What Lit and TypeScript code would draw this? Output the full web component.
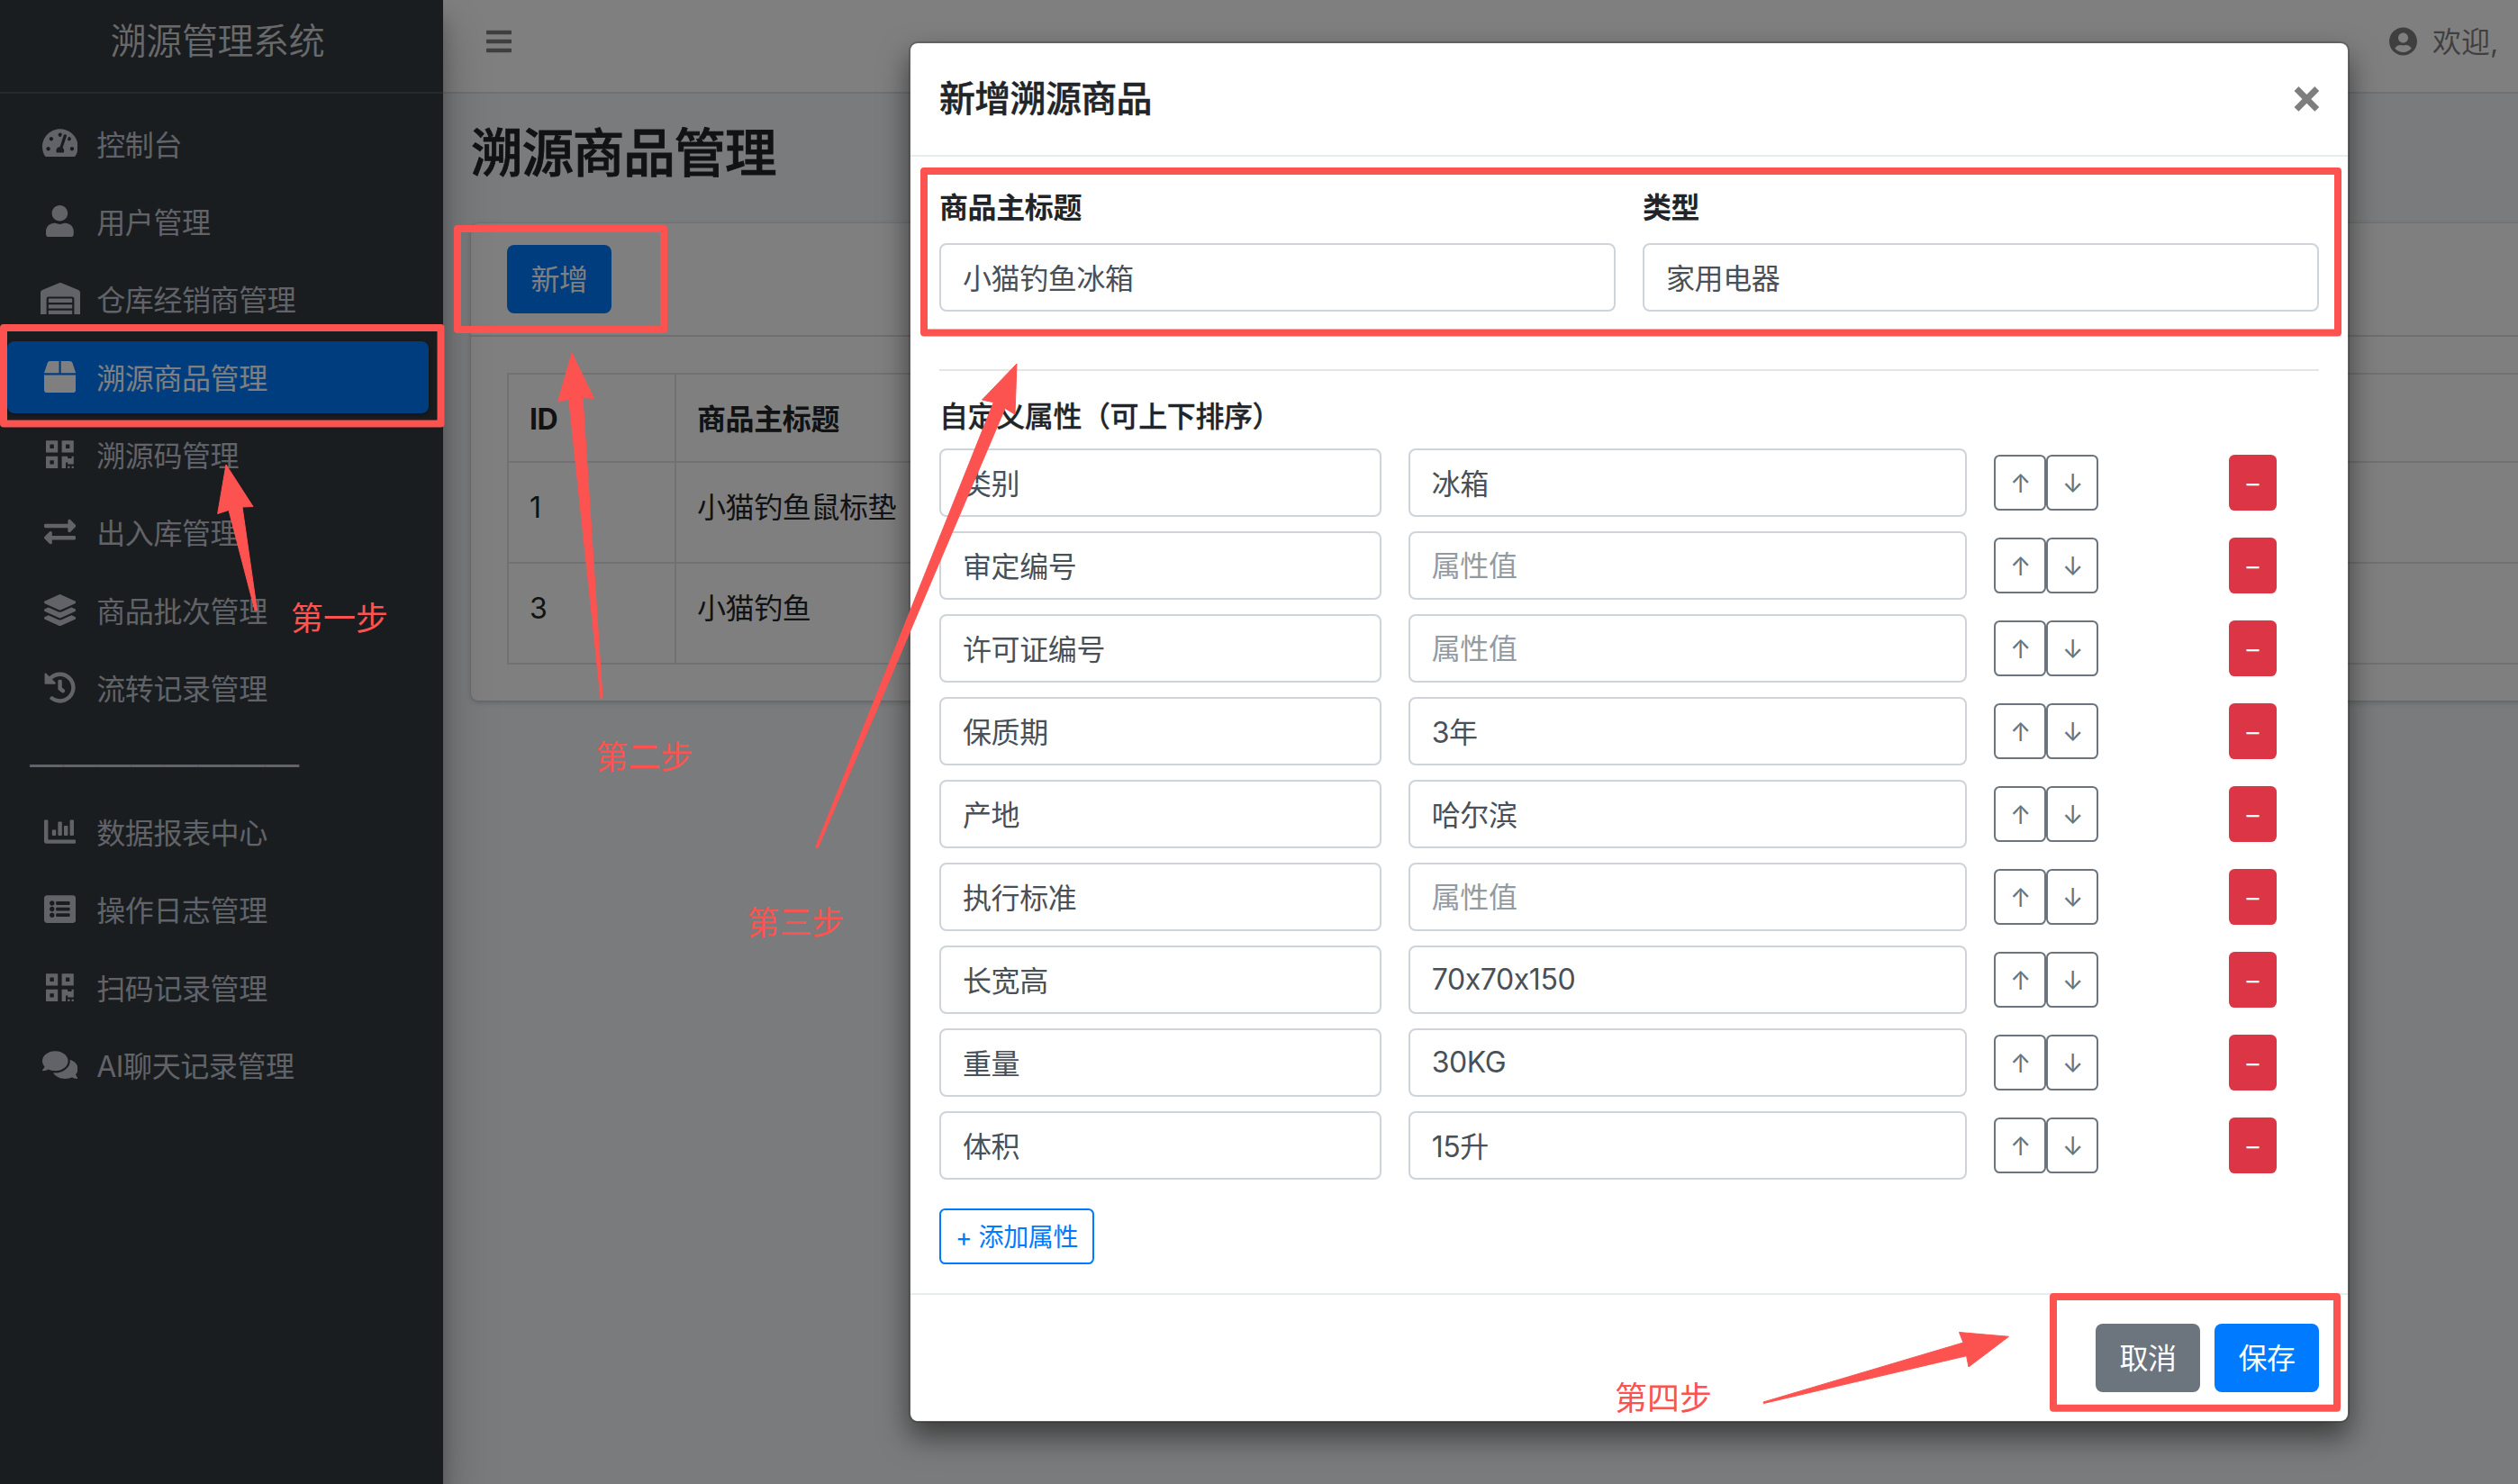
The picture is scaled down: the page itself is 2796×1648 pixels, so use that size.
import { LitElement, html, svg, css } from "lit";
import { customElement, property, state } from "lit/decorators.js";
import { classMap } from "lit/directives/class-map.js";

interface Icon {
  w: number;
  d: string;
}

interface NavItem {
  icon: string;
  label: string;
  active?: boolean;
}

interface Attr {
  name: string;
  value: string;
}

/* =========================
   ICONS
========================= */
const ICONS: Record<string, Icon> = {
  bars: {
    w: 448,
    d: "M16 132h416c8.837 0 16-7.163 16-16V76c0-8.837-7.163-16-16-16H16C7.163 60 0 67.163 0 76v40c0 8.837 7.163 16 16 16zm0 160h416c8.837 0 16-7.163 16-16v-40c0-8.837-7.163-16-16-16H16c-8.837 0-16 7.163-16 16v40c0 8.837 7.163 16 16 16zm0 160h416c8.837 0 16-7.163 16-16v-40c0-8.837-7.163-16-16-16H16c-8.837 0-16 7.163-16 16v40c0 8.837 7.163 16 16 16z",
  },
  userCircle: {
    w: 496,
    d: "M248 8C111 8 0 119 0 256s111 248 248 248 248-111 248-248S385 8 248 8zm0 96c48.6 0 88 39.4 88 88s-39.4 88-88 88-88-39.4-88-88 39.4-88 88-88zm0 344c-58.7 0-111.3-26.6-146.5-68.2 18.8-35.4 55.6-59.8 98.5-59.8 2.4 0 4.8.4 7.1 1.1 13 4.2 26.6 6.9 40.9 6.9 14.3 0 28-2.7 40.9-6.9 2.3-.7 4.7-1.1 7.1-1.1 42.9 0 79.7 24.4 98.5 59.8C359.3 421.4 306.7 448 248 448z",
  },
  dashboard: {
    w: 576,
    d: "M288 32C128.94 32 0 160.94 0 320c0 52.8 14.25 102.26 39.06 144.8 5.61 9.62 16.3 15.2 27.44 15.2h443c11.14 0 21.83-5.58 27.44-15.2C561.75 422.26 576 372.8 576 320c0-159.06-128.94-288-288-288zm0 64c14.71 0 26.58 10.13 30.32 23.65-1.11 2.26-2.64 4.23-3.45 6.67l-9.22 27.67c-5.13 3.49-10.97 6.01-17.64 6.01-17.67 0-32-14.33-32-32S270.33 96 288 96zM96 384c-17.67 0-32-14.33-32-32s14.33-32 32-32 32 14.33 32 32-14.33 32-32 32zm48-160c-17.67 0-32-14.33-32-32s14.33-32 32-32 32 14.33 32 32-14.33 32-32 32zm246.77-72.41l-61.33 184C343.13 347.33 352 364.54 352 384c0 11.72-3.38 22.55-8.88 32H232.88c-5.5-9.45-8.88-20.28-8.88-32 0-33.94 26.5-61.43 59.9-63.59l61.34-184.01c4.17-12.56 17.73-19.45 30.36-15.17 12.57 4.19 19.35 17.79 15.17 30.36zm14.66 57.2l15.52-46.55c3.47-1.29 7.13-2.23 11.05-2.23 17.67 0 32 14.33 32 32s-14.33 32-32 32c-11.38-.01-20.89-6.28-26.57-15.22zM480 384c-17.67 0-32-14.33-32-32s14.33-32 32-32 32 14.33 32 32-14.33 32-32 32z",
  },
  user: {
    w: 448,
    d: "M224 256c70.7 0 128-57.3 128-128S294.7 0 224 0 96 57.3 96 128s57.3 128 128 128zm89.6 32h-16.7c-22.2 10.2-46.9 16-72.9 16s-50.6-5.8-72.9-16h-16.7C60.2 288 0 348.2 0 422.4V464c0 26.5 21.5 48 48 48h352c26.5 0 48-21.5 48-48v-41.6c0-74.2-60.2-134.4-134.4-134.4z",
  },
  warehouse: {
    w: 640,
    d: "M504 352H136.4c-4.4 0-8 3.6-8 8l-.1 48c0 4.4 3.6 8 8 8H504c4.4 0 8-3.6 8-8v-48c0-4.4-3.6-8-8-8zm0 96H136.1c-4.4 0-8 3.6-8 8l-.1 48c0 4.4 3.6 8 8 8h368c4.4 0 8-3.6 8-8v-48c0-4.4-3.6-8-8-8zm0-192H136.6c-4.4 0-8 3.6-8 8l-.1 48c0 4.4 3.6 8 8 8H504c4.4 0 8-3.6 8-8v-48c0-4.4-3.6-8-8-8zm106.5-139L338.4 3.7a48.15 48.15 0 0 0-36.9 0L29.5 117C11.7 124.5 0 141.9 0 161.3V504c0 4.4 3.6 8 8 8h80c4.4 0 8-3.6 8-8V256c0-17.6 14.6-32 32.6-32h382.8c18 0 32.6 14.4 32.6 32v248c0 4.4 3.6 8 8 8h80c4.4 0 8-3.6 8-8V161.3c0-19.4-11.7-36.8-29.5-44.3z",
  },
  box: {
    w: 512,
    d: "M509.5 184.6L458.9 32.8C452.4 13.2 434.1 0 413.4 0H272v192h238.7c-.4-2.5-.4-5-1.2-7.4zM240 0H98.6c-20.7 0-39 13.2-45.5 32.8L2.5 184.6c-.8 2.4-.8 4.9-1.2 7.4H240V0zM0 224v240c0 26.5 21.5 48 48 48h416c26.5 0 48-21.5 48-48V224H0z",
  },
  qrcode: {
    w: 448,
    d: "M0 224h192V32H0v192zM64 96h64v64H64V96zm192-64v192h192V32H256zm128 128h-64V96h64v64zM0 480h192V288H0v192zm64-128h64v64H64v-64zm352-64h32v128h-96v-32h-32v96h-64V288h96v32h64v-32zm0 160h32v32h-32v-32zm-64 0h32v32h-32v-32z",
  },
  exchange: {
    w: 512,
    d: "M0 168v-16c0-13.255 10.745-24 24-24h360V80c0-21.367 25.899-32.042 40.971-16.971l80 80c9.372 9.373 9.372 24.569 0 33.941l-80 80C409.956 271.982 384 261.456 384 240v-48H24c-13.255 0-24-10.745-24-24zm488 152H128v-48c0-21.314-25.862-32.08-40.971-16.971l-80 80c-9.372 9.373-9.372 24.569 0 33.941l80 80C102.057 463.997 128 453.437 128 432v-48h360c13.255 0 24-10.745 24-24v-16c0-13.255-10.745-24-24-24z",
  },
  layers: {
    w: 512,
    d: "M12.41 148.02l232.94 105.67c6.8 3.09 14.49 3.09 21.29 0l232.94-105.67c16.55-7.51 16.55-32.52 0-40.03L266.65 2.31a25.607 25.607 0 0 0-21.29 0L12.41 107.98c-16.55 7.51-16.55 32.53 0 40.04zm487.18 88.28l-58.09-26.33-161.64 73.27c-7.56 3.43-15.59 5.17-23.86 5.17s-16.29-1.74-23.86-5.17L70.51 209.97l-58.1 26.33c-16.55 7.5-16.55 32.5 0 40l232.94 105.59c6.8 3.08 14.49 3.08 21.29 0L499.59 276.3c16.55-7.5 16.55-32.5 0-40zm0 127.8l-57.87-26.23-161.86 73.37c-7.56 3.43-15.59 5.17-23.86 5.17s-16.29-1.74-23.86-5.17L70.29 337.87 12.41 364.1c-16.55 7.5-16.55 32.5 0 40l232.94 105.59c6.8 3.08 14.49 3.08 21.29 0L499.59 404.1c16.55-7.5 16.55-32.5 0-40z",
  },
  history: {
    w: 512,
    d: "M504 255.531c.253 136.64-111.18 248.372-247.82 248.468-59.015.042-113.223-20.53-155.822-54.911-11.077-8.94-11.905-25.541-1.839-35.607l11.267-11.267c8.609-8.609 22.353-9.551 31.891-1.984C173.062 425.135 212.781 440 256 440c101.705 0 184-82.311 184-184 0-101.705-82.311-184-184-184-48.814 0-93.149 18.969-126.068 49.932l50.754 50.754c10.08 10.08 2.941 27.314-11.313 27.314H24c-8.837 0-16-7.163-16-16V38.627c0-14.254 17.234-21.393 27.314-11.314l49.372 49.372C129.209 34.136 189.552 8 256 8c136.81 0 247.747 110.78 248 247.531zm-180.912 78.784l9.823-12.63c8.138-10.463 6.253-25.542-4.21-33.679L288 256.349V152c0-13.255-10.745-24-24-24h-16c-13.255 0-24 10.745-24 24v135.651l65.409 50.874c10.463 8.137 25.541 6.253 33.679-4.21z",
  },
  chart: {
    w: 512,
    d: "M332.8 320h38.4c6.4 0 12.8-6.4 12.8-12.8V172.8c0-6.4-6.4-12.8-12.8-12.8h-38.4c-6.4 0-12.8 6.4-12.8 12.8v134.4c0 6.4 6.4 12.8 12.8 12.8zm96 0h38.4c6.4 0 12.8-6.4 12.8-12.8V76.8c0-6.4-6.4-12.8-12.8-12.8h-38.4c-6.4 0-12.8 6.4-12.8 12.8v230.4c0 6.4 6.4 12.8 12.8 12.8zm-288 0h38.4c6.4 0 12.8-6.4 12.8-12.8v-70.4c0-6.4-6.4-12.8-12.8-12.8h-38.4c-6.4 0-12.8 6.4-12.8 12.8v70.4c0 6.4 6.4 12.8 12.8 12.8zm96 0h38.4c6.4 0 12.8-6.4 12.8-12.8V108.8c0-6.4-6.4-12.8-12.8-12.8h-38.4c-6.4 0-12.8 6.4-12.8 12.8v198.4c0 6.4 6.4 12.8 12.8 12.8zM496 384H64V80c0-8.84-7.16-16-16-16H16C7.16 64 0 71.16 0 80v336c0 17.67 14.33 32 32 32h464c8.84 0 16-7.16 16-16v-32c0-8.84-7.16-16-16-16z",
  },
  list: {
    w: 512,
    d: "M464 480H48c-26.51 0-48-21.49-48-48V80c0-26.51 21.49-48 48-48h416c26.51 0 48 21.49 48 48v352c0 26.51-21.49 48-48 48zM128 120c-22.091 0-40 17.909-40 40s17.909 40 40 40 40-17.909 40-40-17.909-40-40-40zm0 96c-22.091 0-40 17.909-40 40s17.909 40 40 40 40-17.909 40-40-17.909-40-40-40zm0 96c-22.091 0-40 17.909-40 40s17.909 40 40 40 40-17.909 40-40-17.909-40-40-40zm288-136v-32c0-6.627-5.373-12-12-12H204c-6.627 0-12 5.373-12 12v32c0 6.627 5.373 12 12 12h200c6.627 0 12-5.373 12-12zm0 96v-32c0-6.627-5.373-12-12-12H204c-6.627 0-12 5.373-12 12v32c0 6.627 5.373 12 12 12h200c6.627 0 12-5.373 12-12zm0 96v-32c0-6.627-5.373-12-12-12H204c-6.627 0-12 5.373-12 12v32c0 6.627 5.373 12 12 12h200c6.627 0 12-5.373 12-12z",
  },
  comments: {
    w: 576,
    d: "M416 192c0-88.4-93.1-160-208-160S0 103.6 0 192c0 34.3 14.1 65.9 38 92-13.4 30.2-35.5 54.2-35.8 54.5-2.2 2.3-2.8 5.7-1.5 8.7S4.8 352 8 352c36.6 0 66.9-12.3 88.7-25 32.2 15.7 70.3 25 111.3 25 114.9 0 208-71.6 208-160zm122 220c23.9-26 38-57.7 38-92 0-66.9-53.5-124.2-129.3-148.1.9 6.6 1.3 13.3 1.3 20.1 0 105.9-107.7 192-240 192-10.8 0-21.3-.8-31.7-1.9C207.8 439.6 281.8 480 368 480c41 0 79.1-9.2 111.3-25 21.8 12.7 52.1 25 88.7 25 3.2 0 6.1-1.9 7.3-4.8 1.3-2.9.7-6.3-1.5-8.7-.3-.3-22.4-24.2-35.8-54.5z",
  },
};

@customElement("fa-icon")
class FaIcon extends LitElement {
  @property() name = "";
  @property({ type: Number }) size = 32;

  static styles = css`
    :host {
      display: inline-flex;
    }
    svg {
      display: block;
      fill: currentColor;
    }
  `;

  render() {
    const icon = ICONS[this.name];
    if (!icon) return html``;
    return html`
      <svg
        width=${(this.size * icon.w) / 512}
        height=${this.size}
        viewBox="0 0 ${icon.w} 512"
      >
        <path d=${icon.d}></path>
      </svg>
    `;
  }
}

/* =========================
   SIDEBAR
========================= */
@customElement("side-nav")
class SideNav extends LitElement {
  static styles = css`
    :host {
      display: flex;
      flex-direction: column;
      background: #343a40;
      color: #c2c7d0;
      box-shadow: 0 28px 56px rgba(0, 0, 0, 0.25), 0 20px 20px rgba(0, 0, 0, 0.22);
    }
    .brand {
      box-sizing: border-box;
      height: 104px;
      padding: 16px 9px 0 0;
      border-bottom: 2px solid #4b545c;
      font-size: 40px;
      line-height: 60px;
      font-weight: 350;
      text-align: center;
      color: rgba(255, 255, 255, 0.8);
    }
    nav {
      padding: 16px 16px 0 8px;
    }
    .item {
      display: flex;
      align-items: center;
      box-sizing: border-box;
      height: 80px;
      margin-bottom: 6.4px;
      padding: 0 32px;
      border-radius: 8px;
      white-space: nowrap;
    }
    .item.active {
      background: #007bff;
      color: #fff;
      box-shadow: 0 2px 6px rgba(0, 0, 0, 0.12), 0 2px 4px rgba(0, 0, 0, 0.24);
    }
    .icon {
      display: flex;
      justify-content: center;
      width: 51.2px;
      margin: 0 15px 2px 1px;
    }
    .text {
      padding-top: 3px;
    }
    .divider {
      height: 73.4px;
      padding-left: 25px;
      font-size: 37.4px;
      line-height: 76px;
      letter-spacing: 0;
      overflow: hidden;
      white-space: nowrap;
    }
  `;

  private items: NavItem[] = [
    { icon: "dashboard", label: "控制台" },
    { icon: "user", label: "用户管理" },
    { icon: "warehouse", label: "仓库经销商管理" },
    { icon: "box", label: "溯源商品管理", active: true },
    { icon: "qrcode", label: "溯源码管理" },
    { icon: "exchange", label: "出入库管理" },
    { icon: "layers", label: "商品批次管理" },
    { icon: "history", label: "流转记录管理" },
  ];

  private logItems: NavItem[] = [
    { icon: "chart", label: "数据报表中心" },
    { icon: "list", label: "操作日志管理" },
    { icon: "qrcode", label: "扫码记录管理" },
    { icon: "comments", label: "AI聊天记录管理" },
  ];

  private renderItem(item: NavItem) {
    return html`
      <div class=${classMap({ item: true, active: !!item.active })}>
        <span class="icon"><fa-icon name=${item.icon} size="35.2"></fa-icon></span>
        <span class="text">${item.label}</span>
      </div>
    `;
  }

  render() {
    return html`
      <div class="brand">溯源管理系统</div>
      <nav>
        ${this.items.map(i => this.renderItem(i))}
        <div class="divider">————————</div>
        ${this.logItems.map(i => this.renderItem(i))}
      </nav>
    `;
  }
}

/* =========================
   PRODUCT PAGE
========================= */
@customElement("product-page")
class ProductPage extends LitElement {
  static styles = css`
    :host {
      display: block;
      min-width: 2380px;
      color: #212529;
    }
    .navbar {
      display: flex;
      align-items: flex-start;
      justify-content: space-between;
      box-sizing: border-box;
      height: 104px;
      padding: 22px 97px 0 48px;
      background: #fff;
      border-bottom: 2px solid #dee2e6;
      color: rgba(0, 0, 0, 0.5);
    }
    .menu,
    .user {
      display: flex;
      align-items: center;
      height: 48px;
    }
    .user {
      gap: 17px;
      width: 122px;
      white-space: nowrap;
    }
    .name {
      padding-top: 2px;
      letter-spacing: 0;
    }
    .content {
      padding: 32px 31px;
    }
    h1 {
      margin: 0;
      font-size: 57.6px;
      line-height: 69px;
      font-weight: 500;
      letter-spacing: -1.2px;
      color: #212529;
      -webkit-text-stroke: 0.8px #212529;
    }
    .card {
      margin-top: 43px;
      background: #fff;
      border-radius: 8px;
      box-shadow: 0 0 2px rgba(0, 0, 0, 0.125), 0 2px 6px rgba(0, 0, 0, 0.2);
    }
    .card-header {
      padding: 24px 40px;
      border-bottom: 2px solid rgba(0, 0, 0, 0.125);
    }
    .btn {
      display: block;
      box-sizing: border-box;
      width: 116px;
      height: 76px;
      padding: 2px 0 0;
      border: 0;
      border-radius: 8px;
      background: #007bff;
      color: #fff;
      font: inherit;
      letter-spacing: inherit;
    }
    .card-body {
      padding: 40px;
    }
    table {
      width: 100%;
      border-collapse: collapse;
      table-layout: fixed;
    }
    th,
    td {
      box-sizing: border-box;
      padding: 25.5px 24px 22.5px 23px;
      border: 2px solid #dee2e6;
      text-align: left;
      vertical-align: top;
      line-height: 48px;
    }
    th {
      height: 98px;
      font-weight: 700;
    }
    td {
      height: 112px;
    }
    .id {
      width: 186px;
    }
  `;

  private products = [
    { id: 1, title: "小猫钓鱼鼠标垫" },
    { id: 3, title: "小猫钓鱼" },
  ];

  render() {
    return html`
      <div class="navbar">
        <span class="menu"><fa-icon name="bars"></fa-icon></span>
        <span class="user">
          <fa-icon name="userCircle"></fa-icon>
          <span class="name">欢迎,</span>
        </span>
      </div>
      <div class="content">
        <h1>溯源商品管理</h1>
        <div class="card">
          <div class="card-header"><button class="btn">新增</button></div>
          <div class="card-body">
            <table>
              <thead>
                <tr>
                  <th class="id">ID</th>
                  <th>商品主标题</th>
                </tr>
              </thead>
              <tbody>
                ${this.products.map(p => html`
                  <tr>
                    <td>${p.id}</td>
                    <td>${p.title}</td>
                  </tr>
                `)}
              </tbody>
            </table>
          </div>
        </div>
      </div>
    `;
  }
}

/* =========================
   PRODUCT DIALOG
========================= */
@customElement("product-dialog")
class ProductDialog extends LitElement {
  @state() private attrs: Attr[] = [
    { name: "类别", value: "冰箱" },
    { name: "审定编号", value: "" },
    { name: "许可证编号", value: "" },
    { name: "保质期", value: "3年" },
    { name: "产地", value: "哈尔滨" },
    { name: "执行标准", value: "" },
    { name: "长宽高", value: "70x70x150" },
    { name: "重量", value: "30KG" },
    { name: "体积", value: "15升" },
  ];

  static styles = css`
    :host {
      display: block;
      box-sizing: border-box;
      width: 1600px;
      border: 2px solid rgba(0, 0, 0, 0.2);
      border-radius: 10px;
      background: #fff;
      background-clip: padding-box;
      box-shadow: 0 16px 32px rgba(0, 0, 0, 0.5);
      color: #212529;
    }
    header {
      display: flex;
      justify-content: space-between;
      height: 60px;
      padding: 32px;
      border-bottom: 2px solid #e9ecef;
    }
    .title {
      font-size: 40px;
      line-height: 60px;
      font-weight: 500;
      letter-spacing: -0.7px;
      -webkit-text-stroke: 0.5px #212529;
    }
    .close {
      width: 32px;
      font-size: 54px;
      line-height: 51px;
      font-weight: 700;
      text-align: center;
      opacity: 0.5;
      color: #000;
    }
    .body {
      padding: 32px;
    }
    .main-fields {
      display: grid;
      grid-template-columns: 1fr 1fr;
      gap: 30px;
    }
    label {
      display: block;
      padding-top: 1px;
      margin-bottom: 15px;
      line-height: 48px;
      font-weight: 700;
    }
    input {
      display: block;
      box-sizing: border-box;
      width: 100%;
      height: 76px;
      padding: 0 24px;
      border: 2px solid #ced4da;
      border-radius: 8px;
      background: #fff;
      color: #495057;
      font: inherit;
      letter-spacing: inherit;
      outline: none;
    }
    input:not(:placeholder-shown) {
      padding-bottom: 2px;
    }
    input::placeholder {
      color: #939ba2;
      opacity: 1;
    }
    hr {
      margin: 64px 0 32px;
      border: 0;
      border-top: 2px solid rgba(0, 0, 0, 0.1);
    }
    .subtitle {
      margin-bottom: 16px;
      line-height: 38.4px;
      font-weight: 500;
      -webkit-text-stroke: 0.3px #212529;
    }
    .row {
      display: grid;
      grid-template-columns: 490.7px 620.8px 230.3px 100px;
      column-gap: 30px;
      align-items: center;
      margin-bottom: 16px;
    }
    .row > input:nth-child(2) {
      width: 620.8px;
    }
    .move {
      display: flex;
    }
    .btn {
      box-sizing: border-box;
      height: 76px;
      padding: 1px 0 0;
      border: 2px solid transparent;
      border-radius: 8px;
      background: none;
      background-origin: border-box;
      color: #fff;
      font: inherit;
      letter-spacing: inherit;
    }
    .sm {
      height: 62px;
      border-radius: 6.4px;
      font-size: 28px;
    }
    .arrow {
      width: 58px;
      border-color: #6c757d;
      color: #6c757d;
    }
    .remove {
      width: 53px;
      background: #dc3545;
    }
    .add {
      display: block;
      width: 172px;
      margin-top: 32px;
      border-color: #007bff;
      color: #007bff;
    }
    footer {
      display: flex;
      justify-content: flex-end;
      gap: 16px;
      padding: 32px;
      border-top: 2px solid #e9ecef;
    }
    footer .btn {
      width: 116px;
    }
    .cancel {
      background: #6c757d;
    }
    .save {
      background: #007bff;
    }
  `;

  private move(index: number, step: number) {
    const target = index + step;
    if (target < 0 || target >= this.attrs.length) return;
    const next = [...this.attrs];
    [next[index], next[target]] = [next[target], next[index]];
    this.attrs = next;
  }

  private remove(index: number) {
    this.attrs = this.attrs.filter((_, i) => i !== index);
  }

  private add() {
    this.attrs = [...this.attrs, { name: "", value: "" }];
  }

  render() {
    return html`
      <header>
        <div class="title">新增溯源商品</div>
        <div class="close">×</div>
      </header>
      <div class="body">
        <div class="main-fields">
          <div>
            <label>商品主标题</label>
            <input type="text" value="小猫钓鱼冰箱" />
          </div>
          <div>
            <label>类型</label>
            <input type="text" value="家用电器" />
          </div>
        </div>
        <hr />
        <div class="subtitle">自定义属性（可上下排序）</div>
        ${this.attrs.map((a, i) => html`
          <div class="row">
            <input type="text" placeholder="属性名" .value=${a.name} />
            <input type="text" placeholder="属性值" .value=${a.value} />
            <div class="move">
              <button class="btn sm arrow" @click=${() => this.move(i, -1)}>↑</button>
              <button class="btn sm arrow" @click=${() => this.move(i, 1)}>↓</button>
            </div>
            <button class="btn sm remove" @click=${() => this.remove(i)}>–</button>
          </div>
        `)}
        <button class="btn sm add" @click=${this.add}>+ 添加属性</button>
      </div>
      <footer>
        <button class="btn cancel">取消</button>
        <button class="btn save">保存</button>
      </footer>
    `;
  }
}

/* =========================
   GUIDE MARKS
========================= */
@customElement("guide-marks")
class GuideMarks extends LitElement {
  static styles = css`
    :host {
      display: block;
      pointer-events: none;
    }
    svg {
      display: block;
      width: 2796px;
      height: 1648px;
    }
    .frame {
      fill: none;
      stroke: #fc5351;
      stroke-width: 8;
      stroke-linejoin: round;
    }
    .arrow {
      fill: #fc5351;
      stroke: #fc5351;
      stroke-width: 1;
      stroke-linejoin: round;
    }
    .step {
      fill: #fc5351;
      font-size: 36px;
      letter-spacing: 0;
    }
  `;

  // x, y, width, height of the outer edge
  private frames = [
    [0, 360, 493.5, 114.5],
    [504, 250, 237, 120],
    [1022, 186, 1578, 187.5],
    [2276, 1436, 323, 131.7],
  ];

  private arrows = [
    "251,516 281,562.5 269,563 285.5,678 283,678 254,566.5 241.7,570.5",
    "635,392 659.5,442.5 647,441.5 669,775.5 667,775.5 631.7,443.3 619.5,446",
    "1129,404 1127,460 1116,453.5 908,942 905.5,941 1103.3,446.8 1090.5,444",
    "2230.5,1484.3 2186,1518 2183.6,1505.7 1958.5,1558.5 1958,1557 2180,1491 2175.5,1479.5",
  ];

  private steps = [
    { x: 323, y: 700, label: "第一步" },
    { x: 661.5, y: 854, label: "第二步" },
    { x: 829.5, y: 1038, label: "第三步" },
    { x: 1793, y: 1566, label: "第四步" },
  ];

  render() {
    return html`
      <svg viewBox="0 0 2796 1648">
        ${this.frames.map(([x, y, w, h]) => svg`
          <rect class="frame" x=${x + 4} y=${y + 4} width=${w - 8} height=${h - 8}></rect>
        `)}
        ${this.arrows.map(points => svg`<polygon class="arrow" points=${points}></polygon>`)}
        ${this.steps.map(s => svg`<text class="step" x=${s.x} y=${s.y}>${s.label}</text>`)}
      </svg>
    `;
  }
}

/* =========================
   APP
========================= */
@customElement("app-root")
class AppRoot extends LitElement {
  static styles = css`
    :host {
      display: grid;
      grid-template-columns: 492px minmax(0, 1fr);
      position: relative;
      width: 100vw;
      height: 100vh;
      overflow: hidden;
      background: #f4f6f9;
      font-family: Inter, "Noto Sans CJK SC", sans-serif;
      font-size: 32px;
      line-height: 1.5;
      letter-spacing: -0.4px;
      /* keeps "70x70" from turning into multiplication signs */
      font-feature-settings: "calt" 0;
    }
    side-nav {
      z-index: 1;
    }
    .backdrop {
      position: absolute;
      inset: 0;
      z-index: 2;
      display: flex;
      justify-content: center;
      align-items: flex-start;
      box-sizing: border-box;
      padding: 46px 0 0 822px;
      background: rgba(0, 0, 0, 0.5);
    }
    guide-marks {
      position: absolute;
      inset: 0;
      z-index: 3;
    }
  `;

  render() {
    return html`
      <side-nav></side-nav>
      <product-page></product-page>
      <div class="backdrop">
        <product-dialog></product-dialog>
      </div>
      <guide-marks></guide-marks>
    `;
  }
}
